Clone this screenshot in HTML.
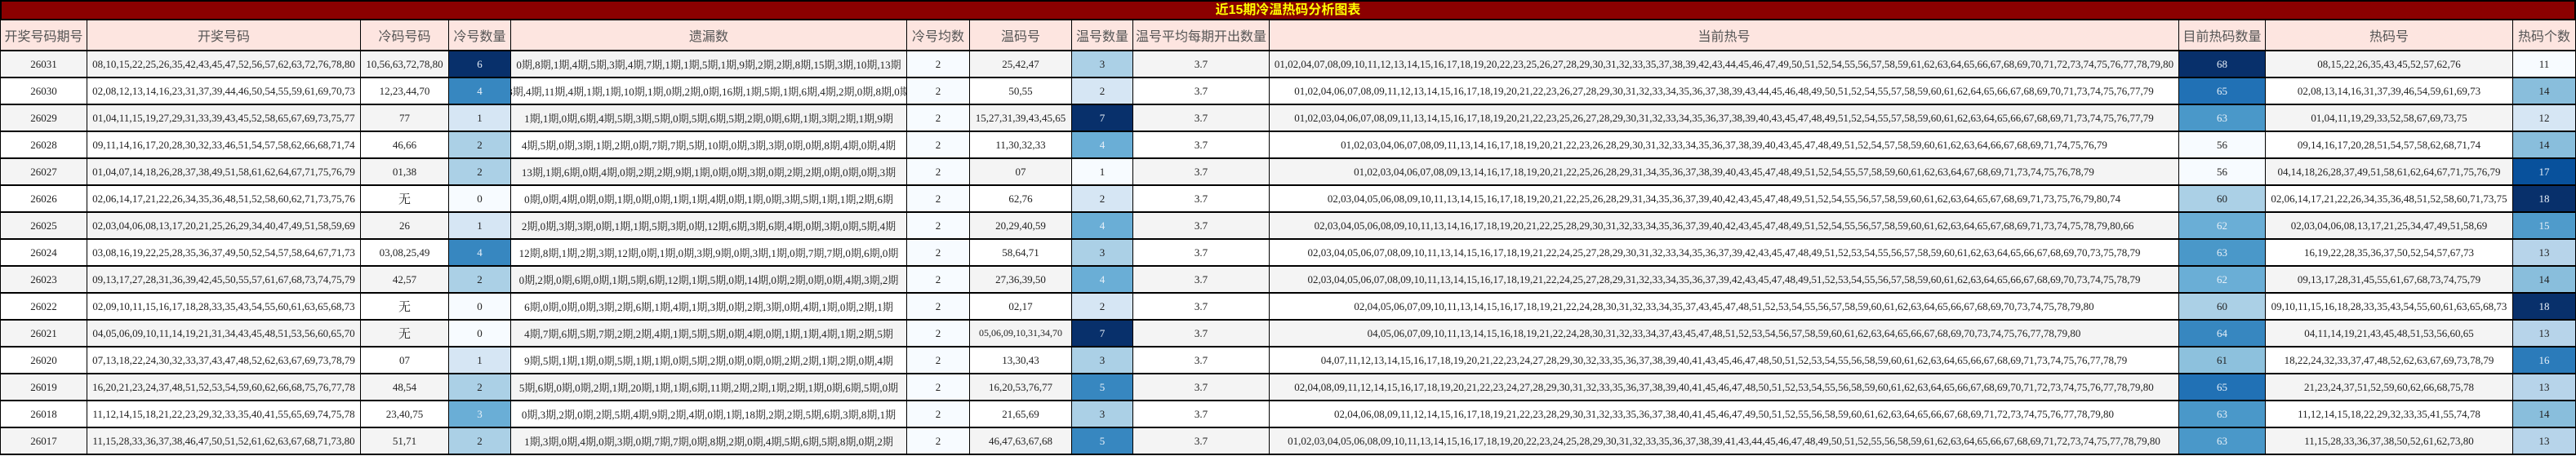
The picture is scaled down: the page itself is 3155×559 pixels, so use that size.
<!DOCTYPE html>
<html><head><meta charset="utf-8"><style>
*{box-sizing:border-box;margin:0;padding:0}
body{width:3155px;height:559px;background:#fff;overflow:hidden;font-family:"Liberation Serif","Noto Serif CJK SC",serif;}
.title{height:25px;background:#8b0000;border:2px solid #000;color:#ffff00;font:bold 16px "Liberation Sans","Noto Sans CJK SC",sans-serif;text-align:center;line-height:21px}
.r{display:flex;height:33px}
.r.h{height:38px;background:#fde5e0}
.r>div{border-right:1px solid #000;border-bottom:2px solid #000;display:flex;align-items:center;justify-content:center;white-space:nowrap;overflow:hidden;font-size:13px;color:#222}
.r>div:first-child{border-left:1px solid #000}
.r.h>div{font:16px "Liberation Sans","Noto Sans CJK SC",sans-serif;color:#555}
.r.o{background:#f4f4f4}
.w{color:#e8f0f8!important}
.c1{width:107px}.c2{width:335px}.c3{width:108px}.c4{width:76px}.c5{width:485px}.c6{width:77px}.c7{width:125px}.c8{width:75px}.c9{width:167px}.c10{width:1114px}.c11{width:106px}.c12{width:303px}.c13{width:77px}
</style></head><body>
<div class="title">近15期冷温热码分析图表</div>
<div class="r h"><div class="c1">开奖号码期号</div><div class="c2">开奖号码</div><div class="c3">冷码号码</div><div class="c4">冷号数量</div><div class="c5">遗漏数</div><div class="c6">冷号均数</div><div class="c7">温码号</div><div class="c8">温号数量</div><div class="c9">温号平均每期开出数量</div><div class="c10">当前热号</div><div class="c11">目前热码数量</div><div class="c12">热码号</div><div class="c13">热码个数</div></div>

<div class="r o"><div class="c1">26031</div><div class="c2">08,10,15,22,25,26,35,42,43,45,47,52,56,57,62,63,72,76,78,80</div><div class="c3">10,56,63,72,78,80</div><div class="c4 w" style="background:#08306b">6</div><div class="c5">0期,8期,1期,4期,5期,3期,4期,7期,1期,1期,5期,1期,9期,2期,2期,8期,15期,3期,10期,13期</div><div class="c6" style="background:#f7fbff">2</div><div class="c7">25,42,47</div><div class="c8" style="background:#abd0e6">3</div><div class="c9">3.7</div><div class="c10">01,02,04,07,08,09,10,11,12,13,14,15,16,17,18,19,20,22,23,25,26,27,28,29,30,31,32,33,35,37,38,39,42,43,44,45,46,47,49,50,51,52,54,55,56,57,58,59,61,62,63,64,65,66,67,68,69,70,71,72,73,74,75,76,77,78,79,80</div><div class="c11 w" style="background:#08306b">68</div><div class="c12">08,15,22,26,35,43,45,52,57,62,76</div><div class="c13" style="background:#f7fbff">11</div></div>

<div class="r"><div class="c1">26030</div><div class="c2">02,08,12,13,14,16,23,31,37,39,44,46,50,54,55,59,61,69,70,73</div><div class="c3">12,23,44,70</div><div class="c4 w" style="background:#3787c0">4</div><div class="c5">3期,4期,11期,4期,1期,1期,10期,1期,0期,2期,0期,16期,1期,5期,1期,6期,4期,2期,0期,8期,0期</div><div class="c6" style="background:#f7fbff">2</div><div class="c7">50,55</div><div class="c8" style="background:#d6e6f4">2</div><div class="c9">3.7</div><div class="c10">01,02,04,06,07,08,09,11,12,13,14,15,16,17,18,19,20,21,22,23,26,27,28,29,30,31,32,33,34,35,36,37,38,39,43,44,45,46,48,49,50,51,52,54,55,57,58,59,60,61,62,64,65,66,67,68,69,70,71,73,74,75,76,77,79</div><div class="c11 w" style="background:#2171b5">65</div><div class="c12">02,08,13,14,16,31,37,39,46,54,59,61,69,73</div><div class="c13" style="background:#89bedc">14</div></div>

<div class="r o"><div class="c1">26029</div><div class="c2">01,04,11,15,19,27,29,31,33,39,43,45,52,58,65,67,69,73,75,77</div><div class="c3">77</div><div class="c4" style="background:#d6e6f4">1</div><div class="c5">1期,1期,0期,6期,4期,5期,3期,5期,0期,5期,6期,5期,2期,0期,6期,1期,3期,2期,1期,9期</div><div class="c6" style="background:#f7fbff">2</div><div class="c7">15,27,31,39,43,45,65</div><div class="c8 w" style="background:#08306b">7</div><div class="c9">3.7</div><div class="c10">01,02,03,04,06,07,08,09,11,13,14,15,16,17,18,19,20,21,22,23,25,26,27,28,29,30,31,32,33,34,35,36,37,38,39,40,43,45,47,48,49,51,52,54,55,57,58,59,60,61,62,63,64,65,66,67,68,69,71,73,74,75,76,77,79</div><div class="c11 w" style="background:#4a98c9">63</div><div class="c12">01,04,11,19,29,33,52,58,67,69,73,75</div><div class="c13" style="background:#d6e6f4">12</div></div>

<div class="r"><div class="c1">26028</div><div class="c2">09,11,14,16,17,20,28,30,32,33,46,51,54,57,58,62,66,68,71,74</div><div class="c3">46,66</div><div class="c4" style="background:#abd0e6">2</div><div class="c5">4期,5期,0期,3期,1期,2期,0期,7期,7期,5期,10期,0期,3期,3期,0期,0期,8期,4期,0期,4期</div><div class="c6" style="background:#f7fbff">2</div><div class="c7">11,30,32,33</div><div class="c8 w" style="background:#6aaed6">4</div><div class="c9">3.7</div><div class="c10">01,02,03,04,06,07,08,09,11,13,14,16,17,18,19,20,21,22,23,26,28,29,30,31,32,33,34,35,36,37,38,39,40,43,45,47,48,49,51,52,54,57,58,59,60,61,62,63,64,66,67,68,69,71,74,75,76,79</div><div class="c11" style="background:#f7fbff">56</div><div class="c12">09,14,16,17,20,28,51,54,57,58,62,68,71,74</div><div class="c13" style="background:#89bedc">14</div></div>

<div class="r o"><div class="c1">26027</div><div class="c2">01,04,07,14,18,26,28,37,38,49,51,58,61,62,64,67,71,75,76,79</div><div class="c3">01,38</div><div class="c4" style="background:#abd0e6">2</div><div class="c5">13期,1期,6期,0期,4期,0期,2期,2期,9期,1期,0期,0期,3期,0期,2期,2期,0期,0期,0期,3期</div><div class="c6" style="background:#f7fbff">2</div><div class="c7">07</div><div class="c8" style="background:#f7fbff">1</div><div class="c9">3.7</div><div class="c10">01,02,03,04,06,07,08,09,13,14,16,17,18,19,20,21,22,25,26,28,29,31,34,35,36,37,38,39,40,43,45,47,48,49,51,52,54,55,57,58,59,60,61,62,63,64,67,68,69,71,73,74,75,76,78,79</div><div class="c11" style="background:#f7fbff">56</div><div class="c12">04,14,18,26,28,37,49,51,58,61,62,64,67,71,75,76,79</div><div class="c13 w" style="background:#08519c">17</div></div>

<div class="r"><div class="c1">26026</div><div class="c2">02,06,14,17,21,22,26,34,35,36,48,51,52,58,60,62,71,73,75,76</div><div class="c3" style="font-size:15px">无</div><div class="c4" style="background:#f7fbff">0</div><div class="c5">0期,0期,4期,0期,0期,1期,0期,0期,1期,1期,4期,0期,1期,0期,3期,5期,1期,1期,2期,6期</div><div class="c6" style="background:#f7fbff">2</div><div class="c7">62,76</div><div class="c8" style="background:#d6e6f4">2</div><div class="c9">3.7</div><div class="c10">02,03,04,05,06,08,09,10,11,13,14,15,16,17,18,19,20,21,22,25,26,28,29,31,34,35,36,37,39,40,42,43,45,47,48,49,51,52,54,55,56,57,58,59,60,61,62,63,64,65,67,68,69,71,73,75,76,79,80,74</div><div class="c11" style="background:#abd0e6">60</div><div class="c12">02,06,14,17,21,22,26,34,35,36,48,51,52,58,60,71,73,75</div><div class="c13 w" style="background:#08306b">18</div></div>

<div class="r o"><div class="c1">26025</div><div class="c2">02,03,04,06,08,13,17,20,21,25,26,29,34,40,47,49,51,58,59,69</div><div class="c3">26</div><div class="c4" style="background:#d6e6f4">1</div><div class="c5">2期,0期,3期,3期,0期,1期,1期,5期,3期,0期,12期,6期,3期,6期,4期,0期,3期,0期,5期,4期</div><div class="c6" style="background:#f7fbff">2</div><div class="c7">20,29,40,59</div><div class="c8 w" style="background:#6aaed6">4</div><div class="c9">3.7</div><div class="c10">02,03,04,05,06,08,09,10,11,13,14,16,17,18,19,20,21,22,25,28,29,30,31,32,33,34,35,36,37,39,40,42,43,45,47,48,49,51,52,54,55,56,57,58,59,60,61,62,63,64,65,67,68,69,71,73,74,75,78,79,80,66</div><div class="c11 w" style="background:#6aaed6">62</div><div class="c12">02,03,04,06,08,13,17,21,25,34,47,49,51,58,69</div><div class="c13 w" style="background:#4f9bcb">15</div></div>

<div class="r"><div class="c1">26024</div><div class="c2">03,08,16,19,22,25,28,35,36,37,49,50,52,54,57,58,64,67,71,73</div><div class="c3">03,08,25,49</div><div class="c4 w" style="background:#3787c0">4</div><div class="c5">12期,8期,1期,2期,3期,12期,0期,1期,0期,3期,9期,0期,3期,1期,0期,7期,7期,0期,6期,0期</div><div class="c6" style="background:#f7fbff">2</div><div class="c7">58,64,71</div><div class="c8" style="background:#abd0e6">3</div><div class="c9">3.7</div><div class="c10">02,03,04,05,06,07,08,09,10,11,13,14,15,16,17,18,19,21,22,24,25,27,28,29,30,31,32,33,34,35,36,37,39,42,43,45,47,48,49,51,52,53,54,55,56,57,58,59,60,61,62,63,64,65,66,67,68,69,70,73,75,78,79</div><div class="c11 w" style="background:#4a98c9">63</div><div class="c12">16,19,22,28,35,36,37,50,52,54,57,67,73</div><div class="c13" style="background:#b7d4ea">13</div></div>

<div class="r o"><div class="c1">26023</div><div class="c2">09,13,17,27,28,31,36,39,42,45,50,55,57,61,67,68,73,74,75,79</div><div class="c3">42,57</div><div class="c4" style="background:#abd0e6">2</div><div class="c5">0期,2期,0期,6期,0期,1期,5期,6期,12期,1期,5期,0期,14期,0期,2期,0期,0期,4期,3期,2期</div><div class="c6" style="background:#f7fbff">2</div><div class="c7">27,36,39,50</div><div class="c8 w" style="background:#6aaed6">4</div><div class="c9">3.7</div><div class="c10">02,03,04,05,06,07,08,09,10,11,13,14,15,16,17,18,19,21,22,24,25,27,28,29,31,32,33,34,35,36,37,39,42,43,45,47,48,49,51,52,53,54,55,56,57,58,59,60,61,62,63,64,65,66,67,68,69,70,73,74,75,78,79</div><div class="c11 w" style="background:#6aaed6">62</div><div class="c12">09,13,17,28,31,45,55,61,67,68,73,74,75,79</div><div class="c13" style="background:#89bedc">14</div></div>

<div class="r"><div class="c1">26022</div><div class="c2">02,09,10,11,15,16,17,18,28,33,35,43,54,55,60,61,63,65,68,73</div><div class="c3" style="font-size:15px">无</div><div class="c4" style="background:#f7fbff">0</div><div class="c5">6期,0期,0期,0期,3期,2期,6期,1期,4期,1期,3期,0期,2期,3期,0期,4期,1期,0期,2期,1期</div><div class="c6" style="background:#f7fbff">2</div><div class="c7">02,17</div><div class="c8" style="background:#d6e6f4">2</div><div class="c9">3.7</div><div class="c10">02,04,05,06,07,09,10,11,13,14,15,16,17,18,19,21,22,24,28,30,31,32,33,34,35,37,43,45,47,48,51,52,53,54,55,56,57,58,59,60,61,62,63,64,65,66,67,68,69,70,73,74,75,78,79,80</div><div class="c11" style="background:#abd0e6">60</div><div class="c12">09,10,11,15,16,18,28,33,35,43,54,55,60,61,63,65,68,73</div><div class="c13 w" style="background:#08306b">18</div></div>

<div class="r o"><div class="c1">26021</div><div class="c2">04,05,06,09,10,11,14,19,21,31,34,43,45,48,51,53,56,60,65,70</div><div class="c3" style="font-size:15px">无</div><div class="c4" style="background:#f7fbff">0</div><div class="c5">4期,7期,6期,5期,7期,2期,2期,4期,1期,5期,5期,0期,4期,0期,1期,1期,4期,1期,2期,5期</div><div class="c6" style="background:#f7fbff">2</div><div class="c7" style="font-size:12px">05,06,09,10,31,34,70</div><div class="c8 w" style="background:#08306b">7</div><div class="c9">3.7</div><div class="c10">04,05,06,07,09,10,11,13,14,15,16,18,19,21,22,24,28,30,31,32,33,34,37,43,45,47,48,51,52,53,54,56,57,58,59,60,61,62,63,64,65,66,67,68,69,70,73,74,75,76,77,78,79,80</div><div class="c11 w" style="background:#3787c0">64</div><div class="c12">04,11,14,19,21,43,45,48,51,53,56,60,65</div><div class="c13" style="background:#b7d4ea">13</div></div>

<div class="r"><div class="c1">26020</div><div class="c2">07,13,18,22,24,30,32,33,37,43,47,48,52,62,63,67,69,73,78,79</div><div class="c3">07</div><div class="c4" style="background:#d6e6f4">1</div><div class="c5">9期,5期,1期,1期,0期,5期,1期,1期,0期,5期,2期,0期,0期,0期,2期,2期,1期,2期,0期,4期</div><div class="c6" style="background:#f7fbff">2</div><div class="c7">13,30,43</div><div class="c8" style="background:#abd0e6">3</div><div class="c9">3.7</div><div class="c10">04,07,11,12,13,14,15,16,17,18,19,20,21,22,23,24,27,28,29,30,32,33,35,36,37,38,39,40,41,43,45,46,47,48,50,51,52,53,54,55,56,58,59,60,61,62,63,64,65,66,67,68,69,71,73,74,75,76,77,78,79</div><div class="c11" style="background:#8dc1dd">61</div><div class="c12">18,22,24,32,33,37,47,48,52,62,63,67,69,73,78,79</div><div class="c13 w" style="background:#2b7bba">16</div></div>

<div class="r o"><div class="c1">26019</div><div class="c2">16,20,21,23,24,37,48,51,52,53,54,59,60,62,66,68,75,76,77,78</div><div class="c3">48,54</div><div class="c4" style="background:#abd0e6">2</div><div class="c5">5期,6期,0期,0期,2期,1期,20期,1期,1期,6期,11期,2期,2期,1期,2期,1期,0期,6期,5期,0期</div><div class="c6" style="background:#f7fbff">2</div><div class="c7">16,20,53,76,77</div><div class="c8 w" style="background:#3787c0">5</div><div class="c9">3.7</div><div class="c10">02,04,08,09,11,12,14,15,16,17,18,19,20,21,22,23,24,27,28,29,30,31,32,33,35,36,37,38,39,40,41,45,46,47,48,50,51,52,53,54,55,56,58,59,60,61,62,63,64,65,66,67,68,69,70,71,72,73,74,75,76,77,78,79,80</div><div class="c11 w" style="background:#2171b5">65</div><div class="c12">21,23,24,37,51,52,59,60,62,66,68,75,78</div><div class="c13" style="background:#b7d4ea">13</div></div>

<div class="r"><div class="c1">26018</div><div class="c2">11,12,14,15,18,21,22,23,29,32,33,35,40,41,55,65,69,74,75,78</div><div class="c3">23,40,75</div><div class="c4 w" style="background:#6aaed6">3</div><div class="c5">0期,3期,2期,0期,2期,5期,4期,9期,2期,4期,0期,1期,18期,2期,2期,5期,6期,3期,8期,1期</div><div class="c6" style="background:#f7fbff">2</div><div class="c7">21,65,69</div><div class="c8" style="background:#abd0e6">3</div><div class="c9">3.7</div><div class="c10">02,04,06,08,09,11,12,14,15,16,17,18,19,21,22,23,28,29,30,31,32,33,35,36,37,38,40,41,45,46,47,49,50,51,52,55,56,58,59,60,61,62,63,64,65,66,67,68,69,71,72,73,74,75,76,77,78,79,80</div><div class="c11 w" style="background:#4a98c9">63</div><div class="c12">11,12,14,15,18,22,29,32,33,35,41,55,74,78</div><div class="c13" style="background:#89bedc">14</div></div>

<div class="r o"><div class="c1">26017</div><div class="c2">11,15,28,33,36,37,38,46,47,50,51,52,61,62,63,67,68,71,73,80</div><div class="c3">51,71</div><div class="c4" style="background:#abd0e6">2</div><div class="c5">1期,3期,0期,4期,0期,3期,0期,7期,7期,0期,8期,2期,0期,4期,5期,6期,5期,8期,0期,2期</div><div class="c6" style="background:#f7fbff">2</div><div class="c7">46,47,63,67,68</div><div class="c8 w" style="background:#3787c0">5</div><div class="c9">3.7</div><div class="c10">01,02,03,04,05,06,08,09,10,11,13,14,15,16,17,18,19,20,22,23,24,25,28,29,30,31,32,33,35,36,37,38,39,41,43,44,45,46,47,48,49,50,51,52,55,56,58,59,61,62,63,64,65,66,67,68,69,71,72,73,74,75,77,78,79,80</div><div class="c11 w" style="background:#4a98c9">63</div><div class="c12">11,15,28,33,36,37,38,50,52,61,62,73,80</div><div class="c13" style="background:#b7d4ea">13</div></div>
</body></html>
